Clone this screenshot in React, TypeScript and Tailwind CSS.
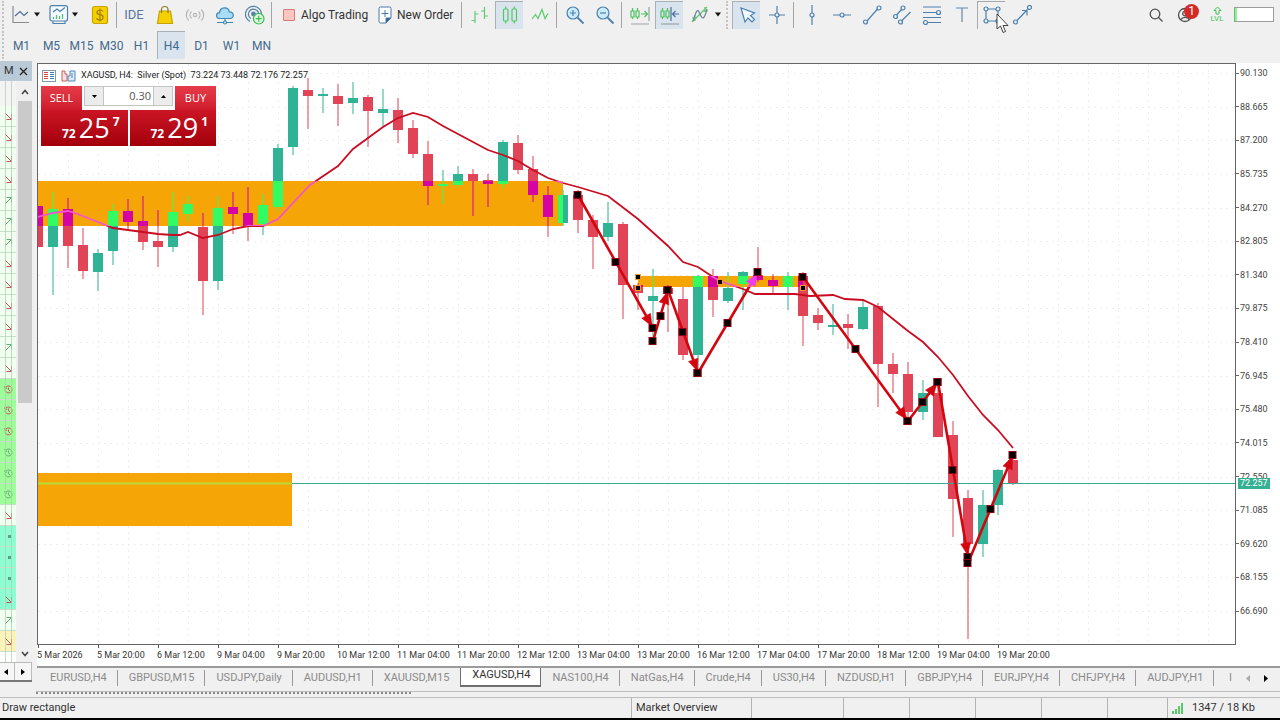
import type { ReactNode } from "react";
import clsx from "clsx";

type Candle = [x: number, high: number, top: number, bottom: number, low: number, dir: "up" | "down"];

const candles: Candle[] = [
  [38, 206, 206, 247, 247, "down"],
  [53, 192, 209, 247, 295, "up"],
  [68, 198, 209, 246, 268, "down"],
  [83, 228, 245, 271, 279, "down"],
  [98, 249, 253, 272, 291, "up"],
  [113, 204, 211, 251, 265, "up"],
  [128, 199, 211, 222, 231, "down"],
  [143, 196, 221, 242, 250, "down"],
  [158, 210, 241, 247, 267, "down"],
  [173, 192, 212, 247, 252, "up"],
  [188, 196, 204, 214, 222, "up"],
  [203, 213, 227, 281, 315, "down"],
  [218, 196, 208, 281, 290, "up"],
  [233, 192, 207, 214, 234, "down"],
  [248, 187, 213, 226, 241, "down"],
  [263, 194, 205, 224, 235, "up"],
  [278, 144, 148, 207, 211, "up"],
  [293, 86, 88, 147, 155, "up"],
  [308, 78, 90, 96, 129, "down"],
  [323, 88, 94, 96, 113, "up"],
  [338, 84, 96, 104, 126, "down"],
  [353, 82, 98, 103, 114, "up"],
  [368, 95, 97, 111, 147, "down"],
  [383, 89, 109, 113, 126, "up"],
  [398, 98, 110, 130, 143, "down"],
  [413, 120, 128, 154, 158, "down"],
  [428, 141, 154, 186, 205, "down"],
  [443, 170, 184, 186, 204, "up"],
  [458, 166, 174, 185, 186, "up"],
  [473, 169, 174, 181, 216, "down"],
  [488, 174, 180, 184, 207, "down"],
  [503, 140, 142, 184, 188, "up"],
  [518, 135, 143, 170, 174, "down"],
  [533, 156, 169, 195, 202, "down"],
  [548, 186, 195, 217, 237, "down"],
  [563, 190, 195, 223, 226, "up"],
  [578, 190, 195, 220, 233, "down"],
  [593, 215, 220, 237, 269, "down"],
  [608, 202, 223, 237, 241, "up"],
  [623, 222, 224, 285, 319, "down"],
  [638, 283, 285, 293, 310, "down"],
  [653, 269, 296, 301, 340, "up"],
  [668, 285, 288, 294, 332, "down"],
  [683, 287, 299, 355, 360, "down"],
  [698, 275, 276, 355, 370, "up"],
  [713, 269, 276, 300, 317, "down"],
  [728, 272, 288, 301, 303, "up"],
  [743, 271, 272, 284, 310, "up"],
  [758, 247, 275, 280, 282, "down"],
  [773, 274, 280, 286, 294, "down"],
  [788, 272, 276, 287, 310, "up"],
  [803, 272, 276, 316, 346, "down"],
  [818, 308, 315, 323, 330, "down"],
  [833, 304, 325, 327, 335, "up"],
  [848, 314, 324, 328, 349, "down"],
  [863, 299, 307, 329, 330, "up"],
  [878, 303, 306, 364, 407, "down"],
  [893, 353, 364, 374, 393, "down"],
  [908, 362, 374, 412, 420, "down"],
  [923, 380, 393, 412, 420, "up"],
  [938, 380, 393, 437, 437, "down"],
  [953, 421, 435, 499, 537, "down"],
  [968, 490, 498, 544, 639, "down"],
  [983, 490, 505, 544, 557, "up"],
  [998, 469, 470, 505, 515, "up"],
  [1013, 455, 460, 483, 485, "down"],
];

const movingAverage =
  "38,217 53,213 68,211 75,213 98,222 113,228 143,232 158,234 173,235 180,235 188,232 203,238 218,235 233,229 248,226 263,226 278,219 293,203 310,185 338,166 353,149 368,138 383,127 398,118 413,113 428,117 443,126 488,150 503,155 518,161 533,170 548,178 563,183 578,187 608,196 638,219 668,246 683,262 698,267 713,277 720,281 743,289 755,294 795,294 810,296 833,295 845,299 863,300 878,307 893,319 908,331 923,342 938,357 953,375 968,396 983,415 998,430 1013,448";

const zones = [
  { x: 38, y: 181, width: 525, height: 45 },
  { x: 38, y: 473, width: 254, height: 53 },
  { x: 638, y: 276, width: 165, height: 11 },
];

const arrows = [
  [578, 195, 653, 328],
  [653, 341, 668, 290],
  [668, 290, 698, 373],
  [698, 373, 758, 272],
  [803, 277, 908, 421],
  [908, 421, 938, 382],
  [938, 382, 968, 557],
  [968, 563, 1013, 455],
];

const zoneAnchors = [
  [638, 277],
  [638, 288],
  [720, 282],
  [803, 288],
];

const prices = [
  "90.130", "88.665", "87.200", "85.735", "84.270", "82.805", "81.340", "79.875", "78.410",
  "76.945", "75.480", "74.015", "72.550", "71.085", "69.620", "68.155", "66.690",
];

const times = [
  "5 Mar 2026", "5 Mar 20:00", "6 Mar 12:00", "9 Mar 04:00", "9 Mar 20:00", "10 Mar 12:00",
  "11 Mar 04:00", "11 Mar 20:00", "12 Mar 12:00", "13 Mar 04:00", "13 Mar 20:00", "16 Mar 12:00",
  "17 Mar 04:00", "17 Mar 20:00", "18 Mar 12:00", "19 Mar 04:00", "19 Mar 20:00",
];

const timeframes = ["M1", "M5", "M15", "M30", "H1", "H4", "D1", "W1", "MN"];

const tabs = [
  "EURUSD,H4", "GBPUSD,M15", "USDJPY,Daily", "AUDUSD,H1", "XAUUSD,M15", "XAGUSD,H4", "NAS100,H4",
  "NatGas,H4", "Crude,H4", "US30,H4", "NZDUSD,H1", "GBPJPY,H4", "EURJPY,H4", "CHFJPY,H4", "AUDJPY,H1",
];

const watchRows = [
  "down", "down", "down", "down", "up", "up", "up", "down", "down", "down", "down", "up", "down",
  "redClock", "redClock", "redClock", "clock", "clock", "clock", "down", "dot", "dot", "dot",
  "downCyan", "up", "downYellow",
];

function Icon({ children, size = 20 }: { children: ReactNode; size?: number }) {
  return (
    <svg
      width={size}
      height={size}
      viewBox="0 0 20 20"
      fill="none"
      stroke="#4d80ae"
      strokeWidth="1.2"
      aria-hidden="true"
      className="shrink-0"
    >
      {children}
    </svg>
  );
}

function Tool({ label, active, children }: { label: string; active?: boolean; children: ReactNode }) {
  return (
    <button
      type="button"
      aria-label={label}
      className={clsx(
        "mx-px flex h-7 w-7 shrink-0 items-center justify-center border-l border-t",
        active ? "border-[#a9b0b6] bg-[#d9e4ee]" : "border-transparent",
      )}
    >
      {children}
    </button>
  );
}

function Caret() {
  return (
    <svg width="8" height="5" viewBox="0 0 8 5" aria-hidden="true" className="shrink-0">
      <path d="M1 0.5h6L4 4.5z" fill="#111" />
    </svg>
  );
}

function Separator() {
  return <span className="mx-[2px] h-[26px] w-px shrink-0 bg-[#a4a4a4]" />;
}

function Grip() {
  return <span className="mx-[2px] h-7 shrink-0 border-l-2 border-dotted border-[#c4c4c4]" />;
}

function MainToolbar() {
  return (
    <div className="flex h-[31px] items-center pb-[2px]">
      <Grip />
      <button type="button" aria-label="Chart type" className="ml-[3px] flex h-7 w-8 items-center">
        <span className="flex w-6 justify-center">
          <Icon>
            <path d="M2 1v16.500h16" stroke="#8b8b8b" />
            <path d="M4 11l5-4.500 4 4 4-3.500" stroke="#4c6c9c" />
          </Icon>
        </span>
        <Caret />
      </button>
      <button type="button" aria-label="Indicators" className="ml-[6px] flex h-7 w-8 items-center">
        <span className="flex w-6 justify-center">
          <Icon>
            <rect x="1" y="0.700" width="17.500" height="15.300" rx="2" fill="#f4faff" />
            <path d="M4 16v2.500h12V16" />
            <path d="M4 7l4-3 3 2.500 5-4" />
            <path d="M4.500 14v-2M7.500 14v-4M10.500 14v-3M13.500 14V9" stroke="#4cc46a" />
          </Icon>
        </span>
        <Caret />
      </button>
      <span className="w-[5px]" />
      <Tool label="Trade">
        <Icon>
          <rect x="2.500" y="1.500" width="15" height="17" rx="2" fill="#f5d000" stroke="#c9a400" />
          <path
            d="M13 6.500c-.5-1-1.500-1.500-3-1.500-4 0-4 4.500 0 4.700 4.200.3 4 5.300 0 5.300-1.800 0-3-.8-3.300-2M10 3.500v13"
            stroke="#a37f00"
          />
        </Icon>
      </Tool>
      <Separator />
      <button type="button" className="w-[30px] text-center text-[13px] text-[#57799f]">
        IDE
      </button>
      <Tool label="Market">
        <Icon>
          <path d="M4.500 6h11l2 12.500h-15z" fill="#f5d000" stroke="#c6a200" />
          <path d="M6.500 8V4.500c0-4 6.500-4 6.500 0V8" stroke="#8d7620" />
        </Icon>
      </Tool>
      <Tool label="Signals">
        <Icon>
          <g stroke="#b7b7b7">
            <circle cx="10" cy="10" r="1.700" />
            <path d="M6.500 6.500c-2 2-2 5 0 7M3.800 4.500c-3.300 3-3.300 8 0 11M13.500 6.500c2 2 2 5 0 7M16.200 4.500c3.300 3 3.300 8 0 11" />
          </g>
        </Icon>
      </Tool>
      <Tool label="Virtual hosting">
        <Icon>
          <path
            d="M5 13.500C.5 13.500.5 8 4.600 7.600 5 1.500 13.500 1.200 14.300 6.800c5 0 5.300 6.700.700 6.700z"
            fill="#a9dcf7"
            stroke="#4287b5"
          />
          <path d="M10 13.500V16M2 17.500h6M12 17.500h6" stroke="#4287b5" />
          <circle cx="10" cy="17.500" r="1.500" stroke="#4287b5" />
        </Icon>
      </Tool>
      <Tool label="Add server">
        <Icon>
          <g stroke="#5583a8">
            <circle cx="8.500" cy="9" r="1.800" fill="#5583a8" />
            <path d="M6 13.500a5 5 0 1 1 7.500-4M5 16.500a8 8 0 1 1 11.500-7.500" />
          </g>
          <circle cx="13.700" cy="13.700" r="5.300" fill="#d9f8dd" stroke="#43b956" />
          <path d="M13.700 10.700v6M10.700 13.700h6" stroke="#43b956" />
        </Icon>
      </Tool>
      <Separator />
      <button type="button" className="flex w-[97px] items-center gap-[6px] pl-[9px]">
        <span className="h-3 w-3 rounded-[1px] border border-[#d77b76] bg-[#ffc5c0]" />
        Algo Trading
      </button>
      <button type="button" className="flex w-[88px] items-center gap-[5px] pl-[7px]">
        <svg width="14" height="18" viewBox="0 0 14 18" fill="#fff" stroke="#4878a8" aria-hidden="true">
          <path d="M2.500 1h9q1.500 0 1.500 1.500V12l-5 5H2.500Q1 17 1 15.500v-13Q1 1 2.500 1z" />
          <path d="M8 17v-5h5z" fill="#35608c" />
          <path d="M7 4v7M3.500 7.500h7" />
        </svg>
        New Order
      </button>
      <Separator />
      <Tool label="Bar chart">
        <Icon>
          <path d="M5 6v12M1.500 15.500H5M5 9h3.500M14.500 2v12M11 6h3.500M14.500 11H18" stroke="#67c776" />
        </Icon>
      </Tool>
      <Tool label="Candlesticks" active>
        <Icon>
          <g stroke="#4fc963">
            <rect x="3.500" y="4" width="4.500" height="12" rx="1" />
            <rect x="12" y="4" width="4.500" height="12" rx="1" />
            <path d="M5.700 1.500V4M5.700 16v2.500M14.200 1.500V4M14.200 16v2.500" />
          </g>
        </Icon>
      </Tool>
      <Tool label="Line chart">
        <Icon>
          <path d="M2 14l3.500-4.500 2.500 4 4-9 3 9 3-5" stroke="#57cc68" />
        </Icon>
      </Tool>
      <Separator />
      <Tool label="Zoom in">
        <Icon>
          <circle cx="8" cy="8" r="6" fill="#c9ebfb" />
          <path d="M12.500 12.500l6 6" strokeWidth="1.800" />
          <path d="M8 5v6M5 8h6" />
        </Icon>
      </Tool>
      <Tool label="Zoom out">
        <Icon>
          <circle cx="8" cy="8" r="6" fill="#c9ebfb" />
          <path d="M12.500 12.500l6 6" strokeWidth="1.800" />
          <path d="M5 8h6" />
        </Icon>
      </Tool>
      <Separator />
      <Tool label="Auto scroll">
        <Icon>
          <path d="M1 6h3v6H1zM6 6h3v6H6zM2.500 3v3M2.500 12v2M7.500 3v3M7.500 12v2M11 9h6M14.500 6l3 3-3 3" stroke="#4cc05f" />
          <path d="M19 2v14M1 19h18" stroke="#9aa3aa" />
        </Icon>
      </Tool>
      <Tool label="Chart shift" active>
        <Icon>
          <path d="M1 6h3v6H1zM6 6h3v6H6zM2.500 3v3M2.500 12v2M7.500 3v3M7.500 12v2" stroke="#4cc05f" />
          <path d="M11 2v14M19 9h-6M15.500 6l-3 3 3 3" stroke="#4c70a0" />
          <path d="M1 19h18" stroke="#9aa3aa" />
        </Icon>
      </Tool>
      <Tool label="Indicator list">
        <Icon>
          <path d="M2 17L17 2M2 13h5M13 6h5M5 10v6M15 2v5" stroke="#65c474" />
          <path d="M3 16C7 3 8 4 10 9s4 7 7-5" stroke="#6c859b" />
        </Icon>
      </Tool>
      <Caret />
      <span className="w-[2px]" />
      <Grip />
      <span className="w-px" />
      <Tool label="Cursor" active>
        <Icon>
          <path d="M4 3l4 14 3-4 4 4 2.500-2.500-4-4 4-2.500z" fill="#f2faff" />
        </Icon>
      </Tool>
      <Tool label="Crosshair">
        <Icon>
          <path d="M10 1v7M10 12v7M2 10h6M12 10h6" />
          <circle cx="10" cy="10" r="2" />
        </Icon>
      </Tool>
      <Separator />
      <Tool label="Vertical line">
        <Icon>
          <path d="M10 0v8M10 12v8" />
          <circle cx="10" cy="10" r="2" />
        </Icon>
      </Tool>
      <Tool label="Horizontal line">
        <Icon>
          <path d="M1 10h7M12 10h7" />
          <circle cx="10" cy="10" r="2" />
        </Icon>
      </Tool>
      <Tool label="Trendline">
        <Icon>
          <path d="M5 16L15.500 4" />
          <circle cx="3.500" cy="17" r="2" />
          <circle cx="17" cy="3" r="2" />
        </Icon>
      </Tool>
      <Tool label="Equidistant channel">
        <Icon>
          <path d="M4.500 10L10 4M9.500 16l9-9" />
          <circle cx="3.500" cy="11.500" r="2" />
          <circle cx="11" cy="3" r="2" />
          <circle cx="8.500" cy="17" r="2" />
        </Icon>
      </Tool>
      <Tool label="Fibonacci retracement">
        <Icon>
          <path d="M1 2h18M1 7.500h13M1 12.500h18M6 17.500h13" />
          <circle cx="16.500" cy="7.500" r="2" />
          <circle cx="3.500" cy="17.500" r="2" />
        </Icon>
      </Tool>
      <Tool label="Text">
        <Icon>
          <path d="M4 3h12M10 3v14" stroke="#6688a8" />
        </Icon>
      </Tool>
      <div className="relative">
        <button
          type="button"
          aria-label="Rectangle"
          className="mx-px flex h-7 w-7 items-center justify-center border-l border-t border-[#a9a9a9]"
        >
          <Icon>
            <path d="M6 4h8M6 16h8M4 6v8M16 6v8" />
            <circle cx="4" cy="4" r="2" />
            <circle cx="16" cy="4" r="2" />
            <circle cx="4" cy="16" r="2" />
            <circle cx="16" cy="16" r="2" />
          </Icon>
        </button>
        <svg
          width="14"
          height="21"
          viewBox="0 0 14 21"
          aria-hidden="true"
          className="pointer-events-none absolute left-5 top-3 z-10"
        >
          <path d="M1 1v15l3.500-3 2.500 6.500 2.500-1L7 12.500h5z" fill="#fff" stroke="#444" />
        </svg>
      </div>
      <Tool label="Arrowed line">
        <Icon>
          <path d="M5 15.500L15.500 4.500M10 5.500h5v5" />
          <circle cx="3.500" cy="17" r="2" />
          <circle cx="17.500" cy="2.500" r="2" />
        </Icon>
      </Tool>

      <div className="ml-auto flex items-center pr-[6px]">
        <Tool label="Search">
          <svg width="16" height="16" viewBox="0 0 16 16" fill="none" stroke="#505050" strokeWidth="1.300" aria-hidden="true">
            <circle cx="7" cy="7" r="4.800" />
            <path d="M10.500 10.500l4 4" />
          </svg>
        </Tool>
        <button type="button" aria-label="Notifications" className="relative mx-px flex h-7 w-7 items-center justify-center">
          <svg width="16" height="16" viewBox="0 0 16 16" fill="none" stroke="#505050" strokeWidth="1.300" aria-hidden="true">
            <circle cx="8" cy="8" r="6.500" />
            <circle cx="8" cy="6.500" r="2.300" />
            <path d="M3.800 12.700c1.500-3 7-3 8.400 0" />
          </svg>
          <span className="absolute right-0 top-[3px] flex h-[15px] w-[15px] items-center justify-center rounded-full bg-[#d42a26] text-[12px] leading-[14px] text-white">
            1
          </span>
        </button>
        <div className="mx-[5px] flex w-6 flex-col items-center text-[8px] leading-[8px] text-[#45c255]">
          <svg width="9" height="9" viewBox="0 0 9 9" fill="none" stroke="#45c255" aria-hidden="true">
            <path d="M4.500 1l3.500 3.500H6V8H3V4.500H1z" />
          </svg>
          LVL
        </div>
        <span className="h-[15px] w-10 border border-[#9d9d9d] border-l-[#4fce5c] bg-white shadow-[inset_2px_0_0_#9fe8a4]" />
      </div>
    </div>
  );
}

function TimeframeBar() {
  return (
    <div className="flex h-[30px] items-center pb-[2px]">
      <Grip />
      <div className="flex">
        {timeframes.map((frame) => (
          <button
            key={frame}
            type="button"
            className={clsx(
              "mx-px h-7 w-7 border-l border-t text-center text-[12px] text-[#43698c]",
              frame === "H4" ? "border-[#a9b0b6] bg-[#d9e4ee]" : "border-transparent",
            )}
          >
            {frame}
          </button>
        ))}
      </div>
    </div>
  );
}

function WatchMark({ kind }: { kind: string }) {
  if (kind === "dot") return <span className="mr-[2px] h-[3px] w-[3px] bg-[#52a38b]" />;
  const red = kind !== "up" && kind !== "clock";
  return (
    <svg width="9" height="9" viewBox="0 0 9 9" fill="none" stroke={red ? "#c05a5a" : "#62b070"} aria-hidden="true">
      {kind.toLowerCase().includes("clock") ? (
        <path d="M2 2a3.500 3.500 0 1 1-1 2.500M1 1v2.200h2.200M4.500 2.500v2.300L6 6" />
      ) : kind === "up" ? (
        <path d="M1 8l6-6M2.500 1.500h5v5" />
      ) : (
        <path d="M1 1l6 6M7.500 2v5.500h-5" />
      )}
    </svg>
  );
}

function MarketWatch() {
  return (
    <aside className="flex w-[37px] shrink-0 flex-col pr-[5px]">
      <div className="flex h-5 items-center justify-between bg-[#b9c9d5] px-1 text-[11px] text-[#333]">
        M
        <button type="button" aria-label="Close">
          <svg width="9" height="9" viewBox="0 0 9 9" stroke="#222" strokeWidth="1.300" aria-hidden="true">
            <path d="M1 1l7 7M8 1L1 8" />
          </svg>
        </button>
      </div>
      <div className="flex min-h-0 flex-1">
        <div className="relative w-4 overflow-hidden bg-white">
          <div className="h-[25px] bg-[#f4f4f4]" />
          {watchRows.map((kind, i) => (
            <div
              key={i}
              className={clsx(
                "flex h-[21px] items-center justify-end border-b border-[#c9dfc9] pr-[3px]",
                kind.toLowerCase().includes("clock")
                  ? "bg-[#9dff97]"
                  : kind === "dot" || kind === "downCyan"
                    ? "bg-[#8cffd2]"
                    : kind === "downYellow"
                      ? "bg-[#fdf3b8]"
                      : "bg-[#f1fff1]",
              )}
            >
              <WatchMark kind={kind} />
            </div>
          ))}
          <div className="absolute inset-y-0 left-[5px] w-[7px] border-x border-[#b4c8b4]/70" />
        </div>
        <div className="ml-px flex flex-1 flex-col items-center bg-[#efefef]">
          <svg width="8" height="20" viewBox="0 0 8 20" fill="none" stroke="#444" strokeWidth="1.600" aria-hidden="true">
            <path d="M1 13l3-3.500L7 13" />
          </svg>
          <div className="h-[302px] w-[14px] bg-[#cacaca]" />
          <svg
            width="8"
            height="8"
            viewBox="0 0 8 8"
            fill="none"
            stroke="#444"
            strokeWidth="1.600"
            aria-hidden="true"
            className="mb-1 mt-auto"
          >
            <path d="M1 2l3 3.500L7 2" />
          </svg>
        </div>
      </div>
      <div className="mb-2 flex h-5 border-b-2 border-[#777] bg-[#f6f6f6]">
        <button type="button" aria-label="Scroll left" className="flex w-[15px] items-center border-r border-t border-[#bbb] pl-1">
          <svg width="4" height="6" viewBox="0 0 4 6" aria-hidden="true">
            <path d="M4 0v6L0 3z" />
          </svg>
        </button>
        <button type="button" aria-label="Scroll right" className="flex flex-1 items-center justify-center border-r border-t border-[#bbb]">
          <svg width="4" height="6" viewBox="0 0 4 6" aria-hidden="true">
            <path d="M0 0v6l4-3z" />
          </svg>
        </button>
      </div>
    </aside>
  );
}

function Candles({ up, down }: { up: string; down: string }) {
  return (
    <>
      {candles.map(([x, high, top, bottom, low, dir]) => (
        <g key={x} fill={dir === "up" ? up : down}>
          <rect x={x - 0.5} y={high} width="1" height={low - high} />
          <rect x={x - 5} y={top} width="10" height={bottom - top} />
        </g>
      ))}
    </>
  );
}

function Arrows({ color }: { color: string }) {
  return (
    <>
      {arrows.map(([x1, y1, x2, y2]) => {
        const angle = (Math.atan2(y2 - y1, x2 - x1) * 180) / Math.PI;
        return (
          <g key={`${x1}-${y1}`} fill={color} stroke={color}>
            <line x1={x1} y1={y1} x2={x2} y2={y2} strokeWidth="2.600" />
            <path d="M-2 0L-14 -5V5Z" strokeWidth="0.500" transform={`translate(${x2} ${y2}) rotate(${angle})`} />
          </g>
        );
      })}
    </>
  );
}

function PriceChart() {
  return (
    <svg viewBox="38 64 1197 580" preserveAspectRatio="none" role="img" aria-label="XAGUSD H4 chart" className="block h-full w-full">
      <defs>
        <clipPath id="zones">
          {zones.map((zone) => (
            <rect key={zone.y} {...zone} />
          ))}
        </clipPath>
      </defs>

      <g stroke="#eeeeee" strokeDasharray="2 4">
        {Array.from({ length: 39 }, (_, i) => (
          <line key={i} x1={68.5 + i * 30} x2={68.5 + i * 30} y1="64" y2="644" />
        ))}
        {prices.map((price, i) => (
          <line key={price} x1="38" x2="1235" y1={Math.round(73 + i * 33.63) + 0.5} y2={Math.round(73 + i * 33.63) + 0.5} />
        ))}
      </g>

      {zones.map((zone) => (
        <rect key={zone.y} {...zone} fill="#f5a606" />
      ))}

      <Candles up="#30b294" down="#e04456" />
      <line x1="38" x2="1235" y1="483.5" y2="483.5" stroke="#3aa992" />
      <polyline points={movingAverage} fill="none" stroke="#c90c22" strokeWidth="1.800" />
      <Arrows color="#d3060f" />

      <g clipPath="url(#zones)">
        {zones.map((zone) => (
          <rect key={zone.y} {...zone} fill="#f5a606" />
        ))}
        <Candles up="#33fb63" down="#d603a3" />
        <line x1="38" x2="1235" y1="483.5" y2="483.5" stroke="#b9da38" strokeWidth="2" />
        <polyline points={movingAverage} fill="none" stroke="#f552cf" strokeWidth="1.800" />
        <Arrows color="#f03cf0" />
      </g>

      {arrows.flatMap(([x1, y1, x2, y2]) =>
        [
          [x1, y1],
          [Math.round((x1 + x2) / 2), Math.round((y1 + y2) / 2)],
          [x2, y2],
        ].map(([x, y]) => (
          <rect key={`${x1}-${y1}-${x}-${y}`} x={x - 4} y={y - 3.5} width="7" height="7" fill="#050000" stroke="#8c0710" />
        )),
      )}
      {zoneAnchors.map(([x, y]) => (
        <rect key={`${x}-${y}`} x={x - 2.5} y={y - 2.5} width="5" height="5" fill="#000" stroke="#f29b2c" />
      ))}
    </svg>
  );
}

function QuoteButton({ small, big, sup }: { small: string; big: string; sup: string }) {
  return (
    <button
      type="button"
      className="flex h-9 flex-1 items-center justify-end bg-linear-to-b from-[#cb1524] to-[#a3000b] pr-2 text-white"
    >
      <span className="mr-[3px] mt-3 text-[12px] font-bold">{small}</span>
      <span className="text-[27px]">{big}</span>
      <span className="mb-3 ml-[3px] text-[12px] font-bold">{sup}</span>
    </button>
  );
}

function OneClickTrading() {
  return (
    <div className="absolute left-[3px] top-[22px] w-[175px] bg-white font-['Open_Sans',sans-serif]">
      <div className="flex h-6">
        <button type="button" className="w-[41px] bg-linear-to-b from-[#e63b49] to-[#cf1b2b] text-[11px] text-white">
          SELL
        </button>
        <div className="mx-[2px] mb-1 flex flex-1 border border-[#c4c4c4]">
          <button type="button" aria-label="Decrease volume" className="flex w-[18px] items-center justify-center bg-[#ececec]">
            <svg width="5" height="3" viewBox="0 0 5 3" aria-hidden="true">
              <path d="M0 0h5L2.500 3z" />
            </svg>
          </button>
          <input
            aria-label="Volume"
            defaultValue="0.30"
            className="w-0 flex-1 border-x border-[#c4c4c4] bg-white pr-[2px] text-right text-[11px] text-[#555]"
          />
          <button type="button" aria-label="Increase volume" className="flex w-[18px] items-center justify-center bg-[#ececec]">
            <svg width="5" height="3" viewBox="0 0 5 3" aria-hidden="true">
              <path d="M0 3h5L2.500 0z" />
            </svg>
          </button>
        </div>
        <button type="button" className="w-[41px] bg-linear-to-b from-[#e63b49] to-[#cf1b2b] text-[11px] text-white">
          BUY
        </button>
      </div>
      <div className="flex gap-[2px]">
        <QuoteButton small="72" big="25" sup="7" />
        <QuoteButton small="72" big="29" sup="1" />
      </div>
    </div>
  );
}

function ChartTitle() {
  return (
    <div className="absolute left-1 top-1 flex h-4 items-center gap-[5px] text-[9px] text-[#222]">
      <svg width="14" height="12" viewBox="0 0 14 12" fill="none" aria-hidden="true">
        <rect x="0.500" y="0.500" width="13" height="11" fill="#fff" stroke="#8298b0" />
        <path d="M2 2.500h4M2 4.500h4M2 6.500h4M2 8.500h4" stroke="#d44" />
        <path d="M8 2.500h4M8 4.500h4M8 6.500h4M8 8.500h4" stroke="#3a76bd" />
      </svg>
      <svg width="15" height="12" viewBox="0 0 15 12" fill="none" aria-hidden="true">
        <path d="M1 1h3v3h2v7H1z" fill="#fbe1e1" stroke="#d05a5a" />
        <path d="M9 1h5v10H7V6h2z" fill="#dcecfa" stroke="#4f86b8" />
        <path d="M11 3v5" stroke="#4f86b8" />
      </svg>
      <span className="whitespace-pre">XAGUSD, H4:  Silver (Spot)  73.224 73.448 72.176 72.257</span>
    </div>
  );
}

function ChartWindow() {
  return (
    <main className="flex min-w-0 flex-1 flex-col pt-[2px]">
      <div className="flex min-h-0 flex-1 bg-white">
        <div className="relative min-w-0 flex-1 border border-[#666]">
          <PriceChart />
          <ChartTitle />
          <OneClickTrading />
        </div>
        <div className="relative flex w-11 shrink-0 flex-col justify-between pb-7 pt-1 text-[9px] leading-[12px] text-[#444]">
          {prices.map((price) => (
            <div key={price} className="flex items-center gap-px">
              <span className="h-px w-[3px] bg-[#666]" />
              {price}
            </div>
          ))}
          <div className="absolute left-[2px] top-[415px] bg-[#36b092] px-[2px] text-[9px] leading-[11px] text-white">
            72.257
          </div>
        </div>
      </div>
      <div className="flex h-[21px] overflow-hidden bg-white text-[9px] text-[#333]">
        {times.map((time) => (
          <div key={time} className="w-[60px] shrink-0 whitespace-nowrap">
            <span className="ml-px block h-[3px] w-px bg-[#555]" />
            <span className="block leading-[14px]">{time}</span>
          </div>
        ))}
      </div>
      <ChartTabs />
    </main>
  );
}

function ChartTabs() {
  return (
    <nav aria-label="Charts" className="flex h-6 items-start overflow-hidden border-t-2 border-[#9b9b9b] pl-[2px] text-[11px] text-[#8b8b8b]">
      {tabs.map((tab, i) => (
        <a
          key={tab}
          href="#"
          className={clsx(
            "flex shrink-0 items-center justify-center whitespace-nowrap pl-[11px] pr-[10px]",
            tab === "XAGUSD,H4"
              ? "-mt-[2px] h-[21px] border-x border-b-2 border-[#6f6f6f] bg-white text-[#333]"
              : "my-[2px] h-4 border-r",
            tab !== "XAGUSD,H4" && (tabs[i + 1] === "XAGUSD,H4" ? "border-transparent" : "border-[#999]"),
          )}
        >
          {tab}
        </a>
      ))}
      <div className="ml-auto flex h-5 items-center gap-[14px] pr-3">
        <span>I</span>
        <svg width="4" height="7" viewBox="0 0 4 7" fill="#aaa" aria-hidden="true">
          <path d="M4 0v7L0 3.500z" />
        </svg>
        <svg width="4" height="7" viewBox="0 0 4 7" aria-hidden="true">
          <path d="M0 0v7l4-3.500z" />
        </svg>
      </div>
    </nav>
  );
}

function StatusBar() {
  return (
    <footer className="flex h-5 text-[11px] text-[#333] [&>*]:flex [&>*]:items-center [&>*+*]:border-l [&>*+*]:border-[#b4b4b4]">
      <div className="flex-1 pl-[2px]">Draw rectangle</div>
      <div className="w-[120px] pl-1">Market Overview</div>
      <div className="w-[92px]" />
      <div className="w-[66px]" />
      <div className="w-[66px]" />
      <div className="w-[66px]" />
      <div className="w-[66px]" />
      <div className="w-[60px]" />
      <div className="w-[113px] gap-2 pl-1">
        <svg width="12" height="11" viewBox="0 0 12 11" fill="#5cc86c" aria-hidden="true">
          <path d="M0 8h2v3H0zM3 6h2v5H3zM6 3h2v8H6zM9 0h2v11H9z" />
        </svg>
        1347 / 18 Kb
      </div>
    </footer>
  );
}

function App() {
  return (
    <div className="flex h-screen flex-col overflow-hidden border-b-2 border-black bg-[#f0f0f0] font-[Roboto,sans-serif] text-[12px] text-[#333]">
      <MainToolbar />
      <TimeframeBar />
      <div className="flex min-h-0 flex-1">
        <MarketWatch />
        <ChartWindow />
      </div>
      <div className="h-2 border-b border-[#bdbdbd] pl-9 pt-px">
        <div className="h-[3px] border-t border-[#bdbdbd]">
          <div className="w-[375px] border-t-2 border-dotted border-[#8a8a8a]" />
        </div>
      </div>
      <StatusBar />
    </div>
  );
}

export default App;
